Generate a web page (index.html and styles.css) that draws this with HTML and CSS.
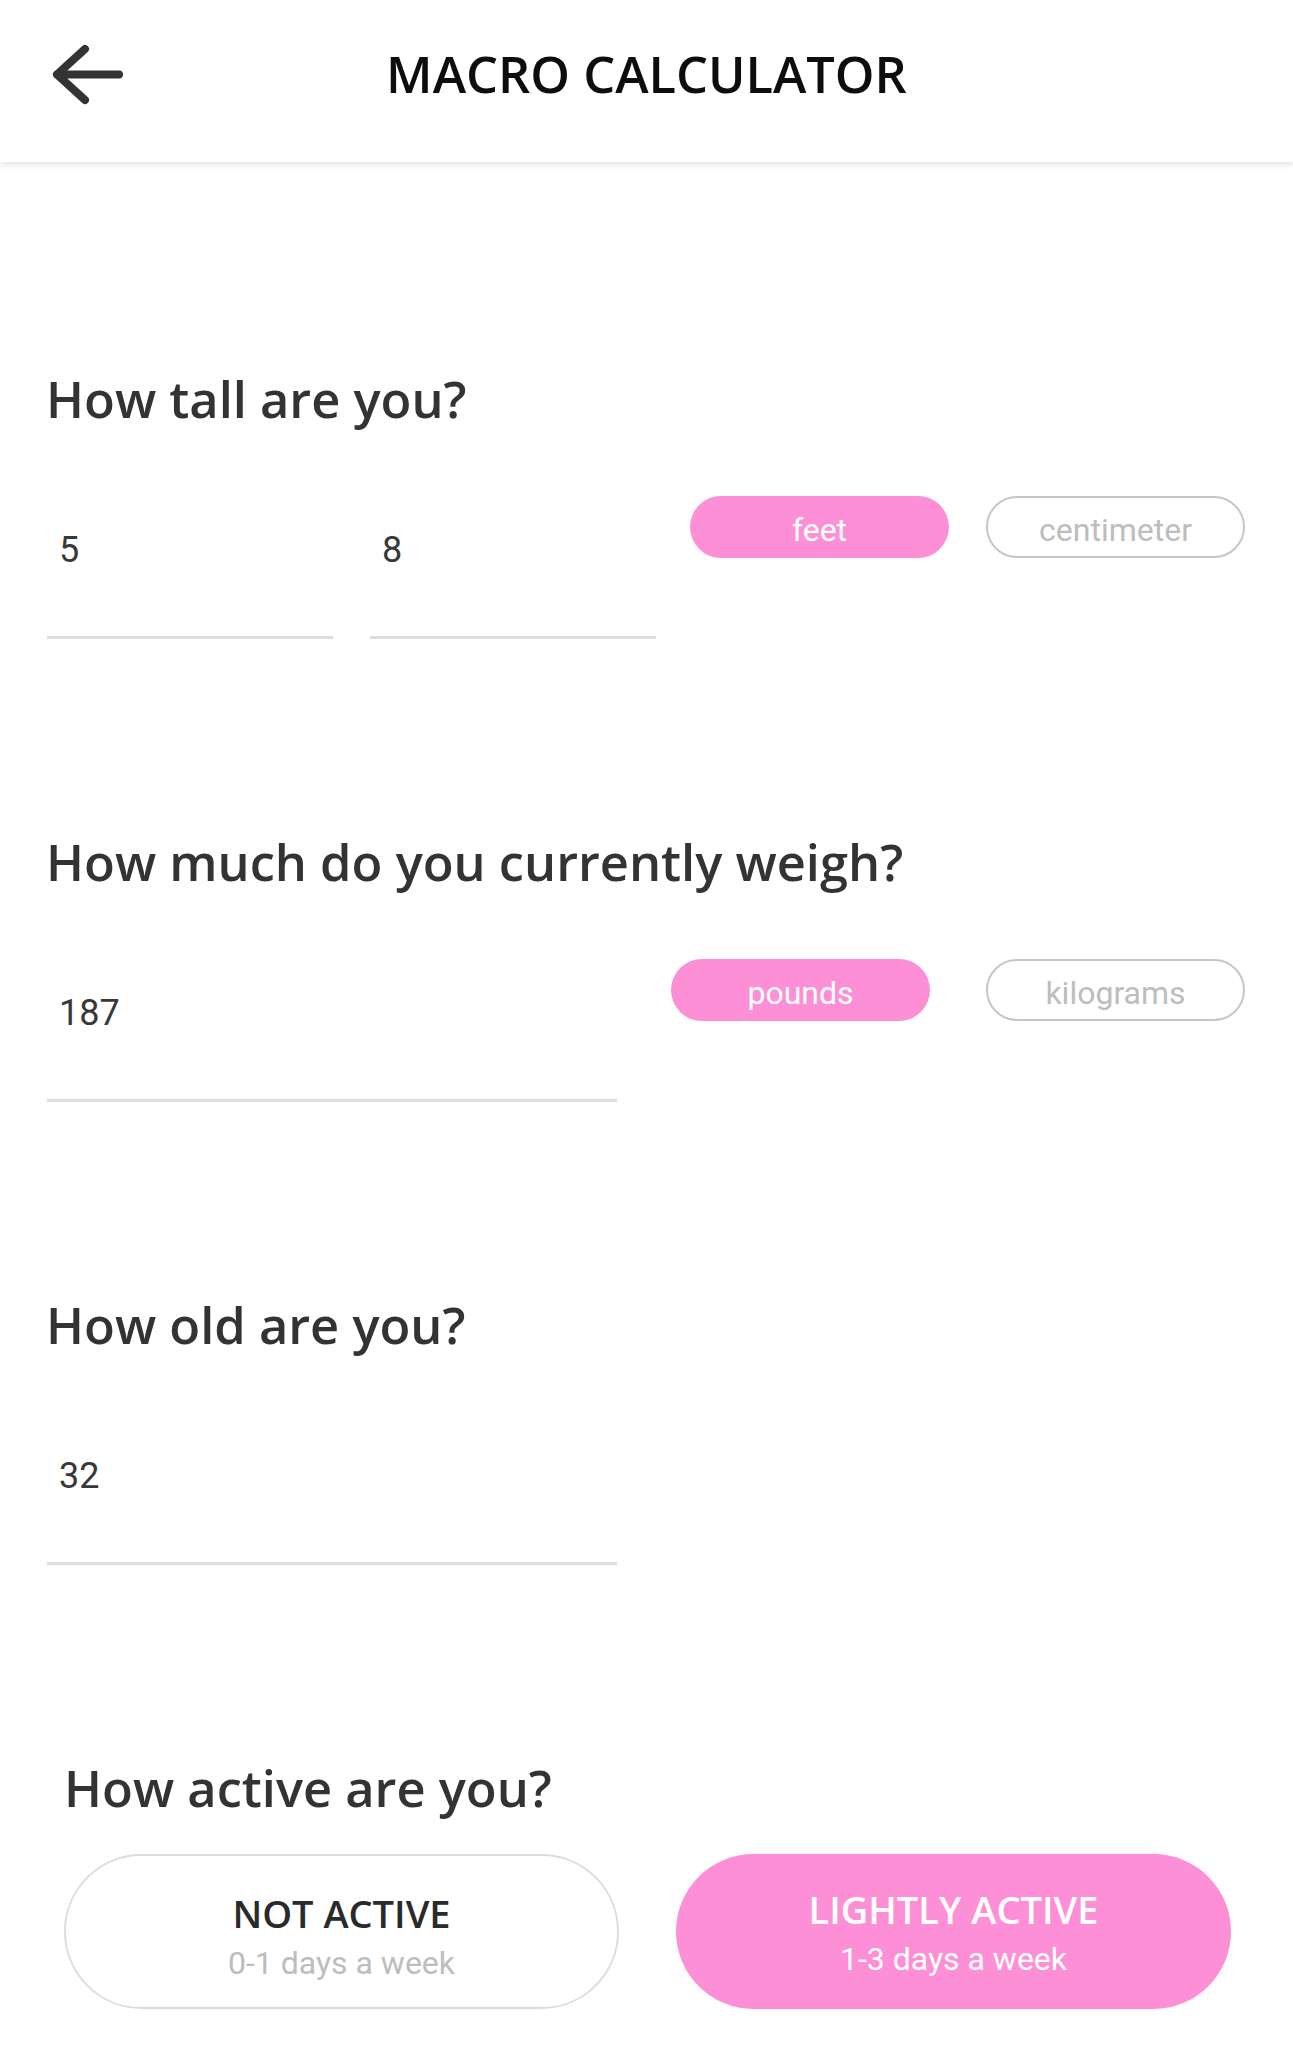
FILE: index.html
```html
<!DOCTYPE html>
<html lang="en">
<head>
<meta charset="utf-8">
<title>Macro Calculator</title>
<link rel="stylesheet" href="styles.css">
</head>
<body>
<header class="topbar">
  <div class="back">
    <svg class="back-icon" width="80" height="70" viewBox="0 0 80 70">
      <path d="M37 9 L9 34.5 L37 60 M9 34.5 L71 34.5" fill="none" stroke="#333" stroke-width="8" stroke-linecap="round" stroke-linejoin="round"/>
    </svg>
  </div>
  <h1 class="title">MACRO CALCULATOR</h1>
  <div></div>
</header>

<main class="content">
  <section class="question">
    <h2 class="q-title">How tall are you?</h2>
    <div class="row">
      <div class="field w-short"><span class="value">5</span></div>
      <div class="field w-short gap-37"><span class="value">8</span></div>
      <div class="pill on gap-34">feet</div>
      <div class="pill off gap-37">centimeter</div>
    </div>
  </section>

  <section class="question">
    <h2 class="q-title">How much do you currently weigh?</h2>
    <div class="row">
      <div class="field w-long"><span class="value">187</span></div>
      <div class="pill on gap-54">pounds</div>
      <div class="pill off gap-56">kilograms</div>
    </div>
  </section>

  <section class="question">
    <h2 class="q-title">How old are you?</h2>
    <div class="row">
      <div class="field w-long"><span class="value">32</span></div>
    </div>
  </section>

  <section class="question activity">
    <h2 class="q-title">How active are you?</h2>
    <div class="choices">
      <div class="choice off">
        <span class="choice-title">NOT ACTIVE</span>
        <span class="choice-sub">0-1 days a week</span>
      </div>
      <div class="choice on">
        <span class="choice-title">LIGHTLY ACTIVE</span>
        <span class="choice-sub">1-3 days a week</span>
      </div>
    </div>
  </section>
</main>
</body>
</html>
```

FILE: styles.css
```css
html, body {
  margin: 0;
  padding: 0;
  background: #ffffff;
}

body {
  font-family: "Open Sans", "Roboto", sans-serif;
  color: #333;
  width: 1293px;
  height: 2048px;
  overflow: hidden;
}

.topbar {
  display: grid;
  grid-template-columns: 1fr auto 1fr;
  align-items: start;
  height: 162px;
  box-sizing: border-box;
  background: #fff;
  box-shadow: 0 2px 7px rgba(0, 0, 0, 0.13);
  position: relative;
  z-index: 1;
}

.back {
  padding: 40px 0 0 48px;
}

.back-icon {
  display: block;
}

.title {
  margin: 0;
  padding-top: 48px;
  font-family: "Open Sans", sans-serif;
  font-weight: 600;
  font-size: 50.5px;
  line-height: 51px;
  color: #0d0d0d;
  letter-spacing: 0;
}

.content {
  padding: 0 48px 0 46px;
}

.question {
  padding-top: 197px;
}

.question:first-child {
  padding-top: 211px;
}

.q-title {
  margin: 0;
  font-family: "Open Sans", sans-serif;
  font-weight: 600;
  font-size: 50.6px;
  line-height: 52px;
  color: #333;
}

.row {
  display: flex;
  align-items: flex-start;
  margin-top: 71px;
  margin-left: 1px;
}

.field {
  box-sizing: border-box;
  height: 143px;
  padding: 36px 0 0 12px;
  border-bottom: 3px solid #dedede;
}

.w-short { width: 286px; }
.w-long { width: 570px; }

.value {
  display: block;
  font-family: "Roboto", sans-serif;
  font-size: 36px;
  line-height: 36px;
  color: #383838;
}

.gap-34 { margin-left: 34px; }
.gap-37 { margin-left: 37px; }
.gap-54 { margin-left: 54px; }
.gap-56 { margin-left: 56px; }

.pill {
  box-sizing: border-box;
  width: 259px;
  height: 62px;
  border-radius: 31px;
  display: flex;
  align-items: center;
  justify-content: center;
  padding-top: 6px;
  font-family: "Roboto", sans-serif;
  font-size: 32px;
  line-height: 32px;
}

.pill.on {
  background: #fd8fd6;
  color: #fff;
}

.pill.off {
  background: #fff;
  border: 2.5px solid #c6c6c6;
  color: #bdbdbd;
}

.activity {
  padding-left: 18px;
}

.choices {
  display: flex;
  margin-top: 40px;
  margin-left: 0;
  gap: 57px;
}

.choice {
  box-sizing: border-box;
  width: 555px;
  height: 155px;
  border-radius: 78px;
  display: flex;
  flex-direction: column;
  align-items: center;
}

.choice.off {
  border: 2.5px solid #dcdcdc;
  padding-top: 35px;
  color: #2a2a2a;
}

.choice.on {
  background: #fd8fd6;
  padding-top: 33px;
  color: #fff;
}

.choice-title {
  font-family: "Open Sans", sans-serif;
  font-weight: 600;
  font-size: 38px;
  line-height: 44px;
}

.choice-sub {
  margin-top: 9px;
  font-family: "Roboto", sans-serif;
  font-size: 32px;
  line-height: 38px;
}

.choice.off .choice-sub {
  color: #bdbdbd;
}

.choice.on .choice-sub {
  color: #fff;
}
```
